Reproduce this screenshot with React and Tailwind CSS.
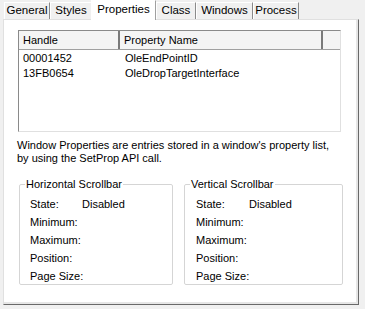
const tabs = [
  { label: "General", w: 46 },
  { label: "Styles", w: 42 },
  { label: "Properties", w: 63, active: true },
  { label: "Class", w: 40 },
  { label: "Windows", w: 57 },
  { label: "Process", w: 46 },
];

const props = [
  { handle: "00001452", name: "OleEndPointID" },
  { handle: "13FB0654", name: "OleDropTargetInterface" },
];

const fields = ["State:", "Minimum:", "Maximum:", "Position:", "Page Size:"];

const GroupBox = ({ title, width, labelPad, valueCol }) => (
  <fieldset
    className="h-[107px] border border-[#d5d5d5] rounded-[2px] m-0 p-0"
    style={{ width }}
  >
    <legend className="ml-[5px] px-[1px] leading-[13px] text-black whitespace-nowrap">
      {title}
    </legend>
    <div className="flex flex-col mt-[4px]" style={{ paddingLeft: labelPad }}>
      {fields.map((f, i) => (
        <div key={f} className="flex h-[18px] items-center whitespace-nowrap">
          <span className="shrink-0" style={{ width: valueCol }}>
            {f}
          </span>
          {i === 0 && <span>Disabled</span>}
        </div>
      ))}
    </div>
  </fieldset>
);

const App = () => {
  return (
    <div className="w-[365px] h-[309px] bg-[#f0f0f0] text-[11px] text-black font-['Liberation_Sans',Arial,sans-serif] overflow-hidden">
      {/* Tabs */}
      <div className="flex items-end h-[19px] pl-[4px]">
        {tabs.map((t) =>
          t.active ? (
            <div
              key={t.label}
              className="relative z-10 -mb-[1px] h-[20px] flex items-center justify-center bg-white border-l border-t border-r border-l-white border-t-white border-r-[#a0a0a0] -ml-[1px] pb-[2px] text-[11.5px]"
              style={{ width: t.w + 2 }}
            >
              {t.label}
            </div>
          ) : (
            <div
              key={t.label}
              className="h-[17px] flex items-center justify-center bg-[#f0f0f0] border-l border-t border-r border-l-white border-t-white border-r-[#8a8a8a] text-[11.5px]"
              style={{ width: t.w }}
            >
              {t.label}
            </div>
          )
        )}
      </div>

      {/* Panel */}
      <div className="ml-[3px] w-[356px] h-[286px] bg-white border border-l-[#e0e0e0] border-t-[#e0e0e0] border-r-[#696969] border-b-[#696969] shadow-[inset_-2px_-2px_0_#e6e6e6] pl-[14px] pt-[10px]">
        {/* List view */}
        <div className="w-[323px] h-[102px] border border-[#8a8a8a] border-r-[#e0e0e0] border-b-[#e0e0e0] bg-white">
          <div className="flex h-[19px] bg-[#f4f4f4] border-b border-[#a0a0a0]">
            <div className="w-[101px] pl-[4px] flex items-center border-r-2 border-[#7a7a7a]">
              Handle
            </div>
            <div className="w-[203px] pl-[4px] flex items-center border-r-2 border-[#7a7a7a]">
              Property Name
            </div>
            <div className="flex-1" />
          </div>
          <div className="pt-[1px]">
            {props.map((p) => (
              <div key={p.handle} className="flex h-[15px] items-center">
                <span className="w-[103px] pl-[4px]">{p.handle}</span>
                <span className="pl-[3px]">{p.name}</span>
              </div>
            ))}
          </div>
        </div>

        {/* Description */}
        <p className="mt-[7px] leading-[13px] -ml-[1px]">
          Window Properties are entries stored in a window's property list,
          <br />
          by using the SetProp API call.
        </p>

        {/* Group boxes */}
        <div className="flex gap-[11px] mt-[13px] ml-[1px]">
          <GroupBox
            title="Horizontal Scrollbar"
            width={154}
            labelPad={10}
            valueCol={52}
          />
          <GroupBox
            title="Vertical Scrollbar"
            width={159}
            labelPad={11}
            valueCol={53}
          />
        </div>
      </div>
    </div>
  );
};

export default App;
